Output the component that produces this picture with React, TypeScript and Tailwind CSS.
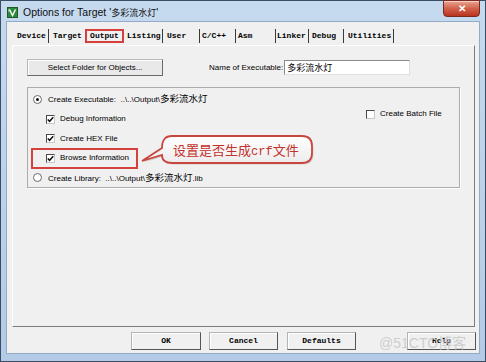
const ui = "font-['Liberation_Sans','Noto_Sans_CJK_SC',sans-serif]";
const mono = "font-['Liberation_Mono','Noto_Sans_CJK_SC',monospace] font-bold";
const cjk = "text-[9.5px] font-['Noto_Sans_CJK_SC',sans-serif]";

const tabs = [
  { label: 'Device', cls: 'w-[34px] pl-[3px]', sep: true },
  { label: 'Target', cls: 'w-[35px] pl-[4px]', sep: false },
  { label: 'Output', cls: 'w-[39px] ml-[1px] border-2 border-[#d6403c] justify-center', sep: false },
  { label: 'Listing', cls: 'w-[38px] pl-[3px]', sep: true },
  { label: 'User', cls: 'w-[36px] pl-[4px]', sep: true },
  { label: 'C/C++', cls: 'w-[35px] pl-[2px]', sep: true },
  { label: 'Asm', cls: 'w-[39px] pl-[2px]', sep: true },
  { label: 'Linker', cls: 'w-[32px] pl-[1px]', sep: true },
  { label: 'Debug', cls: 'w-[34px] pl-[3px]', sep: true },
  { label: 'Utilities', cls: 'w-[49px] pl-[4px]', sep: true },
];

function Check({ on = true }: { on?: boolean }) {
  return (
    <span className="w-[9px] h-[9px] shrink-0 border border-[#4a4a4a] border-r-[#c8c8c8] border-b-[#c8c8c8] bg-white flex items-center justify-center">
      {on && (
        <svg width="7" height="7" viewBox="0 0 7 7">
          <path d="M0.8 3.4 L2.6 5.3 L6.2 1.2" fill="none" stroke="#111" strokeWidth="1.5" />
        </svg>
      )}
    </span>
  );
}

function Radio({ on = false }: { on?: boolean }) {
  return (
    <span className="w-[9px] h-[9px] shrink-0 rounded-full border border-[#6a6a6a] bg-white flex items-center justify-center">
      {on && <span className="w-[3px] h-[3px] rounded-full bg-[#111]" />}
    </span>
  );
}

function Btn({ label, cls }: { label: string; cls: string }) {
  return (
    <div
      className={
        'h-[18px] flex items-center justify-center bg-[#f0f0f0] border border-[#b4b4b4] border-r-[#555] border-b-[#555] shadow-[inset_1px_1px_0_#fff] text-[8px] text-black ' +
        mono +
        ' ' +
        cls
      }
    >
      {label}
    </div>
  );
}

export default function App() {
  return (
    <div
      className={
        'relative w-[486px] h-[362px] flex flex-col border border-[#3b4d63] bg-gradient-to-b from-[#c6daef] to-[#b3cbe6] text-black ' +
        ui
      }
    >
      {/* Title bar */}
      <div className="h-[21px] flex items-start shrink-0">
        <svg className="mt-[6px] ml-[6px]" width="11" height="11" viewBox="0 0 11 11">
          <rect x="0.5" y="0.5" width="10" height="10" fill="#2f8a3c" stroke="#1c5a25" />
          <path d="M2.5 2.5 L5.5 8.5 L8.5 2.5" fill="none" stroke="#fff" strokeWidth="1.4" />
          <path d="M2 2 L2 5" stroke="#d8f0d8" strokeWidth="0.8" />
        </svg>
        <div className="mt-[5px] ml-[5px] text-[10.5px] leading-[12px] text-[#101010] whitespace-pre">
          Options for Target '<span className="text-[9px] font-['Noto_Sans_CJK_SC',sans-serif]">多彩流水灯</span>'
        </div>
        <div className="ml-auto mr-[5px] -mt-px w-[37px] h-[17px] rounded-b-[4px] border border-[#7a2a20] bg-gradient-to-b from-[#e8a593] via-[#d2604b] to-[#b8321f] flex items-center justify-center text-white text-[10px] font-bold leading-none shadow-[inset_0_1px_0_#f6d0c6]">
          ✕
        </div>
      </div>

      {/* Client area */}
      <div className="mx-[6px] h-[331px] shrink-0 bg-[#f0f0f0] ring-1 ring-[#93abc7] flex flex-col">
        {/* Tabs */}
        <div className={'mt-[7px] ml-[7px] h-[14px] flex items-stretch text-[8px] ' + mono}>
          {tabs.map((t) => (
            <div key={t.label} className="flex items-stretch">
              <span className={'flex items-center leading-none ' + t.cls}>{t.label}</span>
              {t.sep && <span className="w-px bg-[#3a3a3a]" />}
            </div>
          ))}
        </div>

        {/* Tab panel */}
        <div className="mt-[2px] ml-[5px] w-[463px] h-[282px] border border-white border-r-[#7d7d7d] border-b-[#7d7d7d] pl-[14px] pt-[13px] text-[8px] leading-none">
          <div className="flex items-center h-[17px]">
            <div className="w-[136px] h-[17px] flex items-center justify-center bg-[#e9e9e9] border border-[#b8b8b8] border-r-[#6a6a6a] border-b-[#6a6a6a] shadow-[inset_1px_1px_0_#fff]">
              Select Folder for Objects...
            </div>
            <span className="ml-[46px]">Name of Executable:</span>
            <div className="ml-[1px] w-[126px] h-[15px] bg-white border border-[#8a8a8a] border-r-[#e0e0e0] border-b-[#e0e0e0] flex items-center pl-[2px]">
              <span className="text-[9px] font-['Noto_Sans_CJK_SC',sans-serif]">多彩流水灯</span>
            </div>
          </div>

          {/* Group box */}
          <div className="mt-[11px] w-[433px] h-[101px] border border-[#acacac] shadow-[1px_1px_0_#fff] pt-[1px] flex flex-col">
            <div className="h-[20px] flex items-center pl-[5px] gap-[6px] whitespace-pre">
              <Radio on />
              <span>
                Create Executable:  ..\..\Output\<span className={cjk}>多彩流水灯</span>
              </span>
            </div>
            <div className="h-[20px] flex items-center pl-[18px]">
              <div className="w-[320px] flex items-center gap-[5px]">
                <Check />
                <span>Debug Information</span>
              </div>
              <div className="flex items-center gap-[5px] mb-[10px]">
                <Check on={false} />
                <span>Create Batch File</span>
              </div>
            </div>
            <div className="h-[19px] flex items-center pl-[18px] gap-[5px]">
              <Check />
              <span>Create HEX File</span>
            </div>
            <div className="h-[20px] flex items-center pl-[18px] gap-[5px]">
              <Check />
              <span>Browse Information</span>
            </div>
            <div className="h-[19px] flex items-center pl-[5px] gap-[6px] whitespace-pre">
              <Radio />
              <span>
                Create Library:  ..\..\Output\<span className={cjk}>多彩流水灯</span>.lib
              </span>
            </div>
          </div>
        </div>

        {/* Bottom buttons */}
        <div className="mt-[5px] pl-[124px] flex">
          <Btn label="OK" cls="w-[70px]" />
          <Btn label="Cancel" cls="w-[69px] ml-[8px]" />
          <Btn label="Defaults" cls="w-[69px] ml-[9px]" />
          <Btn label="Help" cls="w-[69px] ml-[51px]" />
        </div>
      </div>

      {/* Annotation: red frame round Browse Information */}
      <div className="absolute left-[30px] top-[147px] w-[107px] h-[21px] border-2 border-[#d4423e] pointer-events-none" />

      {/* Annotation: callout */}
      <div className="absolute left-[138px] top-[132px] w-[176px] h-[33px]">
        <svg className="absolute inset-0" width="176" height="33" viewBox="0 0 176 33">
          <defs>
            <linearGradient id="bub" x1="0" y1="0" x2="0" y2="1">
              <stop offset="0" stopColor="#ffffff" />
              <stop offset="1" stopColor="#ececec" />
            </linearGradient>
          </defs>
          <path
            d="M33 3 H163 Q173 3 173 13 V20 Q173 30 163 30 H33 Q23 30 23 22 L3 28 L23 15 Q23 3 33 3 Z"
            fill="#b0b0b0"
            opacity="0.45"
            transform="translate(1.5 1.5)"
          />
          <path
            d="M33 3 H163 Q173 3 173 13 V20 Q173 30 163 30 H33 Q23 30 23 22 L3 28 L23 15 Q23 3 33 3 Z"
            fill="url(#bub)"
            stroke="#c9463f"
            strokeWidth="1.8"
          />
        </svg>
        <div className="relative pl-[34px] h-[33px] leading-[33px] text-[13px] text-[#c4302b] font-['Noto_Sans_CJK_SC',sans-serif] whitespace-pre">
          设置是否生成<span className="text-[12px] font-['Liberation_Mono',monospace]">crf</span>文件
        </div>
      </div>

      {/* Watermark */}
      <div className="absolute left-[378px] top-[332px] text-[14px] leading-[18px] text-[#c4c4c4]/80 pointer-events-none whitespace-pre">
        @51CTO<span className="font-['Noto_Sans_CJK_SC',sans-serif]">博客</span>
      </div>
    </div>
  );
}
